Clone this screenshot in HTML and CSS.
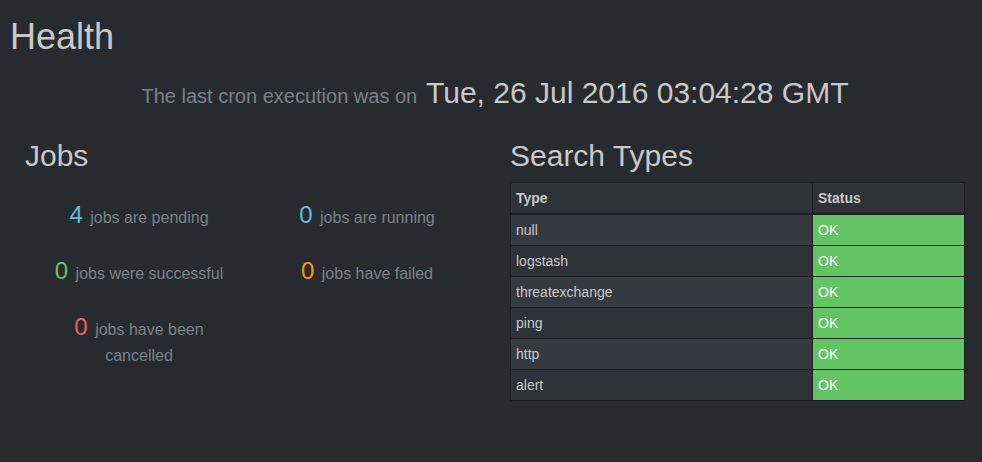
FILE: index.html
```html
<!DOCTYPE html>
<html lang="en">
<head>
<meta charset="utf-8">
<title>Health</title>
<link rel="stylesheet" href="styles.css">
</head>
<body>
<div class="page">
  <h1 class="title">Health</h1>
  <h2 class="cron"><small class="cron-label">The last cron execution was on</small> Tue, 26 Jul 2016 03:04:28 GMT</h2>
  <div class="panels">
    <section class="jobs">
      <h2 class="panel-title">Jobs</h2>
      <div class="job-grid">
        <p class="job"><span class="num info">4</span> jobs are pending</p>
        <p class="job"><span class="num info">0</span> jobs are running</p>
        <p class="job"><span class="num success">0</span> jobs were successful</p>
        <p class="job"><span class="num warning">0</span> jobs have failed</p>
        <p class="job"><span class="num danger">0</span> jobs have been cancelled</p>
      </div>
    </section>
    <section class="search">
      <h2 class="panel-title">Search Types</h2>
      <table class="types">
        <colgroup><col class="col-type"><col class="col-status"></colgroup>
        <thead>
          <tr><th>Type</th><th>Status</th></tr>
        </thead>
        <tbody>
          <tr><td>null</td><td class="ok">OK</td></tr>
          <tr><td>logstash</td><td class="ok">OK</td></tr>
          <tr><td>threatexchange</td><td class="ok">OK</td></tr>
          <tr><td>ping</td><td class="ok">OK</td></tr>
          <tr><td>http</td><td class="ok">OK</td></tr>
          <tr><td>alert</td><td class="ok">OK</td></tr>
        </tbody>
      </table>
    </section>
  </div>
</div>
</body>
</html>
```
FILE: styles.css
```css
html, body {
  margin: 0;
  padding: 0;
  background: #272b30;
}
body {
  font-family: "Liberation Sans", Arial, Helvetica, sans-serif;
  font-size: 14px;
  line-height: 20px;
  color: #c8c8c8;
}
.page {
  padding: 0 8px 0 10px;
}
.title {
  margin: 17px 0 0;
  font-size: 36px;
  line-height: 40px;
  font-weight: 400;
  color: #c8c8c8;
}
.cron {
  margin: 19px 0 0;
  padding-left: 6px;
  font-size: 30px;
  line-height: 33px;
  font-weight: 400;
  text-align: center;
  color: #c8c8c8;
}
.cron-label {
  font-size: 20px;
  line-height: 20px;
  color: #7a8288;
  margin-right: 1px;
}
.panels {
  display: grid;
  grid-template-columns: 455px 454px;
  column-gap: 30px;
  margin: 30px 0 0 15px;
}
.panel-title {
  margin: 0 0 10px;
  font-size: 30px;
  line-height: 33px;
  font-weight: 400;
  color: #c8c8c8;
}
.job-grid {
  display: grid;
  grid-template-columns: 228px 228px;
  row-gap: 30px;
  padding-top: 23px;
}
.job {
  margin: 0 auto;
  max-width: 190px;
  text-align: center;
  font-size: 16px;
  line-height: 26px;
  color: #7a8288;
}
.num {
  font-size: 24px;
  line-height: 0;
  margin-right: 3px;
}
.info { color: #5bc0de; }
.success { color: #62c462; }
.warning { color: #f89406; }
.danger { color: #ee5f5b; }
.types {
  width: 454px;
  table-layout: fixed;
  border-collapse: collapse;
  background: #2e3338;
  font-size: 14px;
  line-height: 20px;
}
.col-type { width: 302px; }
.col-status { width: 152px; }
.types th,
.types td {
  border: 1px solid #1c1e22;
  padding: 5px;
  text-align: left;
  color: #c8c8c8;
}
.types th {
  font-weight: 700;
  border-bottom-width: 2px;
}
.types tbody tr:nth-child(odd) {
  background: #353a41;
}
.types td.ok {
  background: #62c462;
  color: #ffffff;
}
```
